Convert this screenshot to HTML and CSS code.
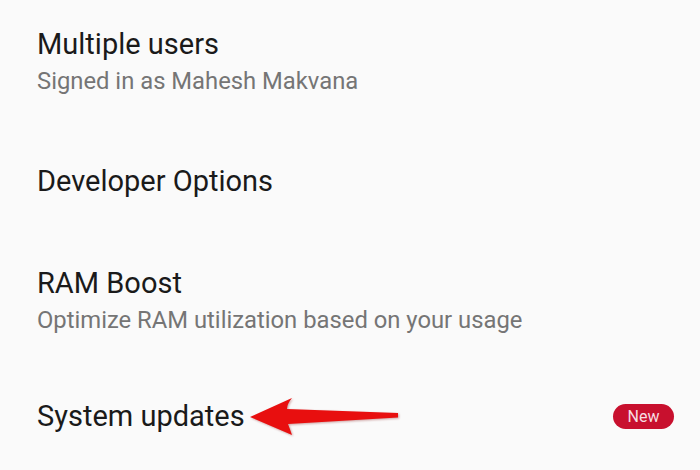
FILE: index.html
```html
<!DOCTYPE html>
<html>
<head>
  <meta charset="utf-8">
  <link rel="stylesheet" href="styles.css">
</head>
<body>
    <div class="settings">
        <div class="item">
            <div class="text">
                <div class="title">Multiple users</div>
                <div class="summary">Signed in as Mahesh Makvana</div>
            </div>
        </div>
        <div class="item">
            <div class="text">
                <div class="title">Developer Options</div>
            </div>
        </div>
        <div class="item">
            <div class="text">
                <div class="title">RAM Boost</div>
                <div class="summary">Optimize RAM utilization based on your usage</div>
            </div>
        </div>
        <div class="item last">
            <div class="text">
                <div class="title">System updates</div>
            </div>
            <span class="badge">New</span>
            <!-- annotation arrow -->
            <svg class="arrow" width="160" height="50" viewBox="0 0 160 50">
                <path d="M10 27 L52 8 Q47 14 47 19 L158 23 L158 27.5 L48 34 Q50 39 52 45 Z" fill="#e80f0f"/>
            </svg>
        </div>
    </div>
</body>
</html>
```

FILE: styles.css
```css
* {
    padding: 0px;
    margin: 0px;
    box-sizing: border-box;
}

body {
    background-color: #fafafa;
    font-family: Roboto, "Noto Sans", sans-serif;
    overflow: hidden;
}

.settings {
    padding-left: 37px;
}

.item {
    display: flex;
    align-items: center;
    padding: 27px 0 41px 0;
    position: relative;
}

.item.last {
    padding-top: 23px;
}

.text {
    flex: 1;
}

.title {
    font-size: 29px;
    line-height: 34px;
    color: #1a1a1a;
}

.summary {
    margin-top: 5px;
    font-size: 23.8px;
    line-height: 30px;
    color: #757575;
}

.badge {
    width: 61px;
    height: 25px;
    margin-right: 26px;
    border-radius: 13px;
    background-color: #c8102e;
    color: #f6dde1;
    font-size: 16px;
    line-height: 25px;
    text-align: center;
}

.arrow {
    position: absolute;
    left: 203px;
    top: 14px;
    filter: drop-shadow(1px 1px 1px rgba(120, 0, 0, 0.35));
}
```
